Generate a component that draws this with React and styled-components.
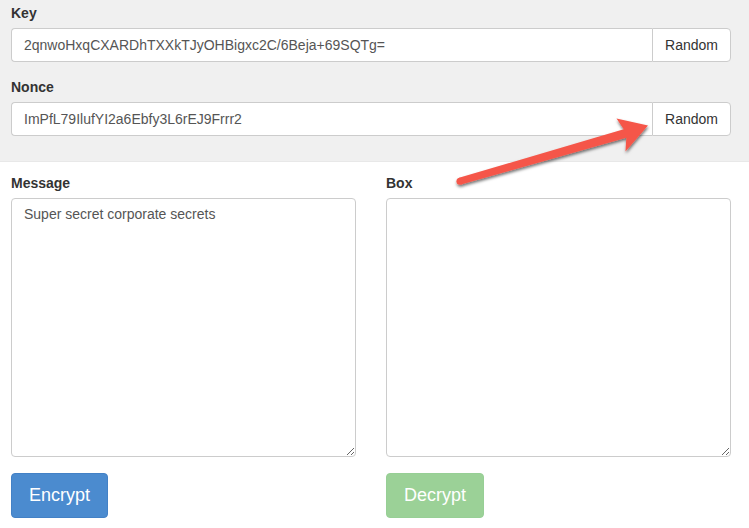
import React, { useState } from "react";
import styled, { createGlobalStyle } from "styled-components";

const GlobalStyle = createGlobalStyle`
  html, body {
    margin: 0;
    padding: 0;
    background: #ffffff;
  }
  body {
    font-family: "Liberation Sans", Arial, sans-serif;
    font-size: 14px;
    line-height: 1.428571;
    color: #333333;
  }
  * {
    box-sizing: border-box;
  }
`;

const App = () => {
  const [key, setKey] = useState("2qnwoHxqCXARDhTXXkTJyOHBigxc2C/6Beja+69SQTg=");
  const [nonce, setNonce] = useState("ImPfL79IlufYI2a6Ebfy3L6rEJ9Frrr2");
  const [message, setMessage] = useState("Super secret corporate secrets");
  const [box, setBox] = useState("");

  return (
    <Page>
      <GlobalStyle />
      <KeysPanel>
        <FormGroup>
          <Label>Key</Label>
          <InputGroup>
            <TextInput value={key} onChange={(e) => setKey(e.target.value)} />
            <AddonButton>Random</AddonButton>
          </InputGroup>
        </FormGroup>
        <FormGroup>
          <Label>Nonce</Label>
          <InputGroup>
            <TextInput value={nonce} onChange={(e) => setNonce(e.target.value)} />
            <AddonButton>Random</AddonButton>
          </InputGroup>
        </FormGroup>
      </KeysPanel>

      <Columns>
        <Column>
          <Label>Message</Label>
          <TextArea value={message} onChange={(e) => setMessage(e.target.value)} />
          <BigButton $variant="primary">Encrypt</BigButton>
        </Column>
        <Column>
          <Label>Box</Label>
          <TextArea value={box} onChange={(e) => setBox(e.target.value)} />
          <BigButton $variant="success" disabled>
            Decrypt
          </BigButton>
        </Column>
      </Columns>

      <Arrow width="749" height="528" viewBox="0 0 749 528">
        <defs>
          <filter id="arrowShadow" x="-10%" y="-30%" width="120%" height="160%">
            <feDropShadow dx="0.5" dy="2" stdDeviation="1.4" floodColor="#000" floodOpacity="0.55" />
          </filter>
        </defs>
        <g filter="url(#arrowShadow)" fill="#f5574a">
          <polygon points="459,177.8 461,184.6 626.3,137.8 625.5,151.5 648,125.5 616.5,118.5 623.7,129.2" />
          <circle cx="460" cy="181.2" r="3.55" />
        </g>
      </Arrow>
    </Page>
  );
};

const Page = styled.div`
  position: relative;
  width: 749px;
  min-height: 528px;
  overflow: hidden;
`;

const KeysPanel = styled.div`
  background-color: #f0f0f0;
  padding: 3px 18px 10px 11px;
  border-bottom: 1px solid #e8e8e8;
`;

const FormGroup = styled.div`
  margin-bottom: 15px;
`;

const Label = styled.label`
  display: block;
  font-weight: bold;
  font-size: 14px;
  line-height: 20px;
  margin-bottom: 5px;
  color: #333333;
`;

const InputGroup = styled.div`
  display: flex;
  height: 34px;
`;

const TextInput = styled.input`
  flex: 1;
  min-width: 0;
  height: 34px;
  padding: 6px 12px;
  font-family: "Liberation Sans", Arial, sans-serif;
  font-size: 14px;
  color: #555555;
  background: #ffffff;
  border: 1px solid #cccccc;
  border-right: none;
  border-radius: 4px 0 0 4px;
  outline: none;
`;

const AddonButton = styled.button`
  width: 79px;
  height: 34px;
  padding: 6px 12px;
  font-family: "Liberation Sans", Arial, sans-serif;
  font-size: 14px;
  color: #333333;
  background: #ffffff;
  border: 1px solid #cccccc;
  border-radius: 0 4px 4px 0;
  cursor: pointer;
`;

const Columns = styled.div`
  display: grid;
  grid-template-columns: 345px 345px;
  column-gap: 30px;
  padding: 11px 18px 0 11px;
`;

const Column = styled.div`
  display: flex;
  flex-direction: column;
  align-items: flex-start;
`;

const TextArea = styled.textarea`
  display: block;
  width: 100%;
  height: 259px;
  padding: 6px 12px;
  font-family: "Liberation Sans", Arial, sans-serif;
  font-size: 14px;
  line-height: 1.428571;
  color: #555555;
  background: #ffffff;
  border: 1px solid #cccccc;
  border-radius: 4px;
  outline: none;
  resize: both;
  margin: 0;
`;

const BigButton = styled.button`
  margin-top: 16px;
  height: 45px;
  padding: 10px 17px;
  font-family: "Liberation Sans", Arial, sans-serif;
  font-size: 18px;
  line-height: 1.3333;
  color: #ffffff;
  border: 1px solid ${(p) => (p.$variant === "primary" ? "#4381c6" : "#97cf95")};
  background-color: ${(p) => (p.$variant === "primary" ? "#4b8bcf" : "#9bd197")};
  border-radius: 4px;
  cursor: ${(p) => (p.disabled ? "not-allowed" : "pointer")};
`;

const Arrow = styled.svg`
  position: absolute;
  top: 0;
  left: 0;
  pointer-events: none;
`;

export default App;
